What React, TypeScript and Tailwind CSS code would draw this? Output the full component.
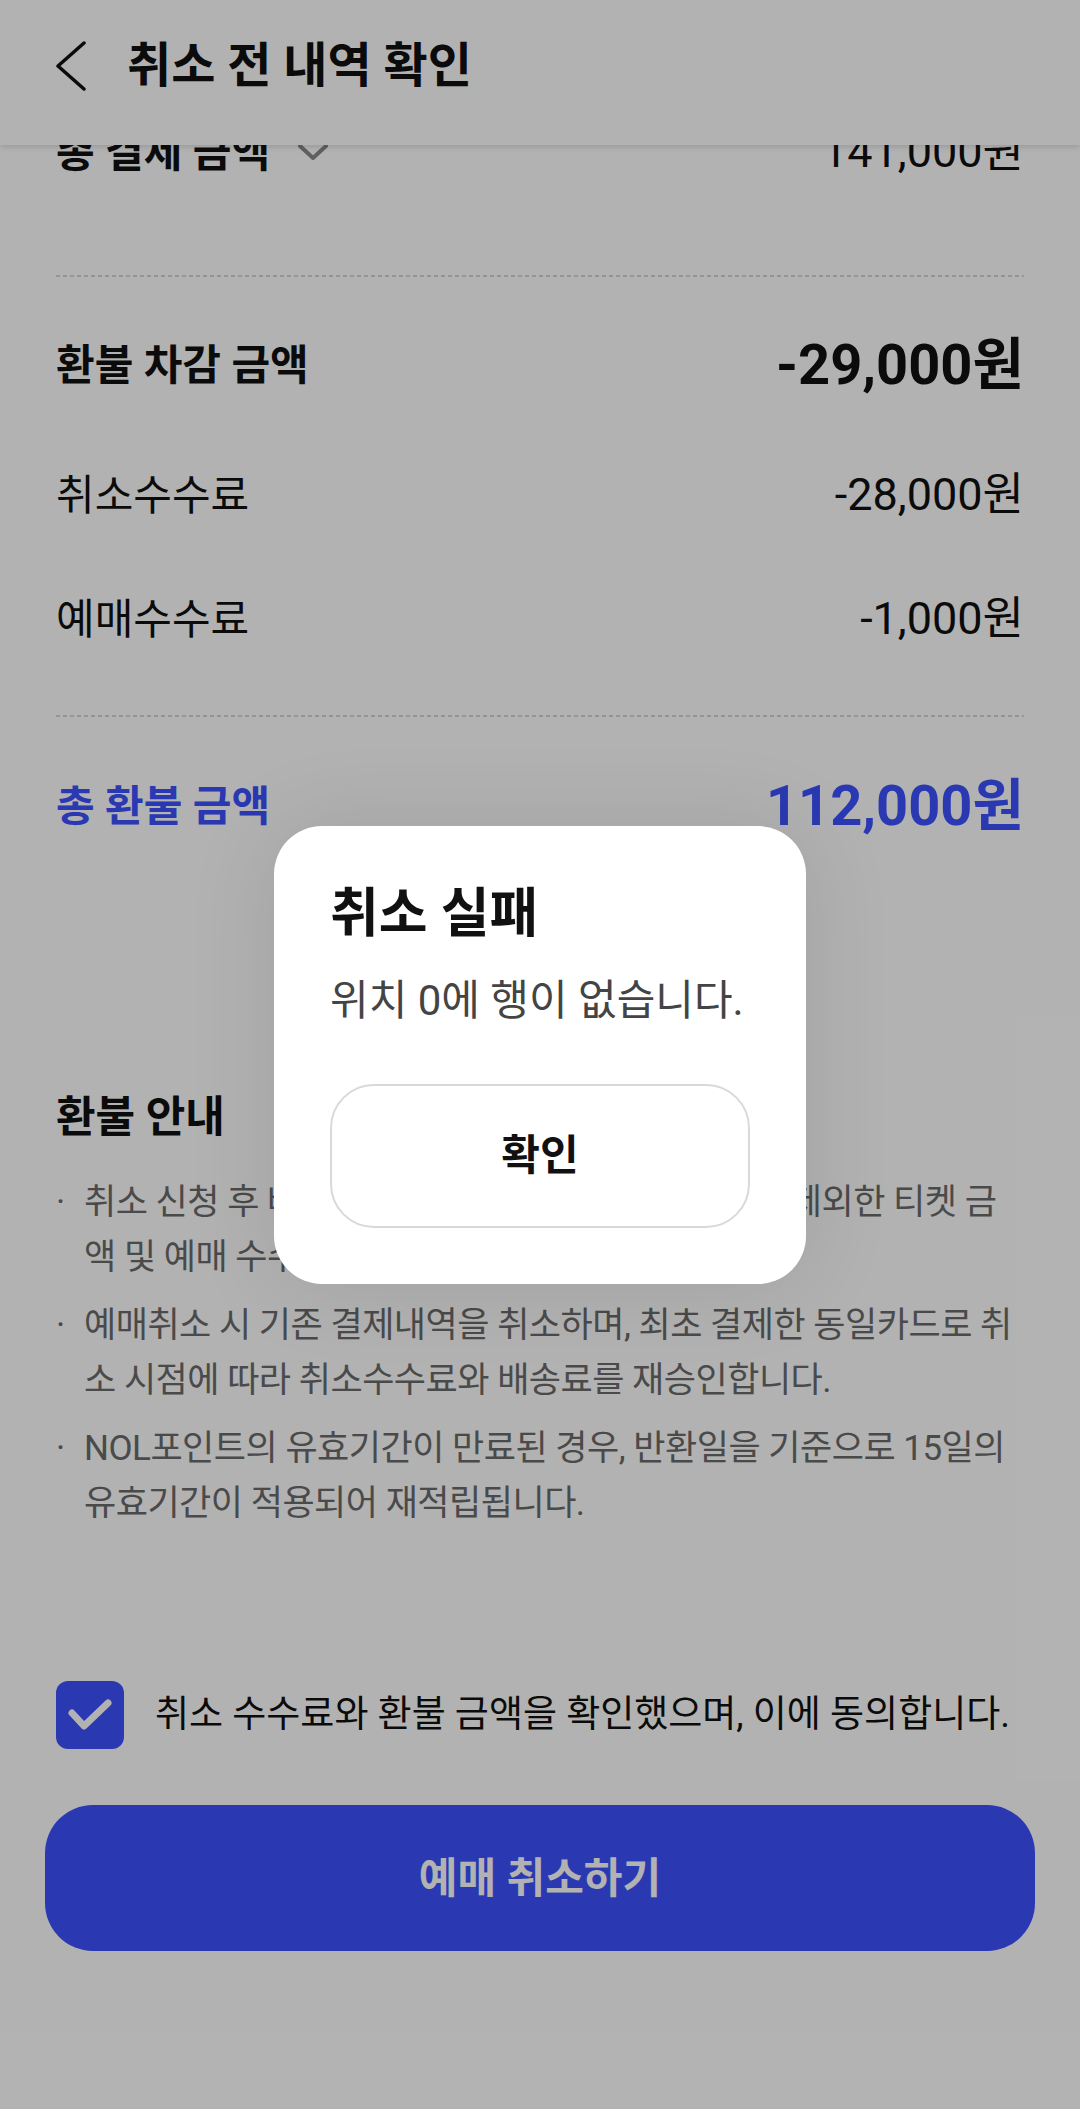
import type { ReactNode } from "react";

const refundNotes: string[][] = [
  ["취소 신청 후 배송비 및 발권 수수료, 취소수수료를 제외한 티켓 금", "액 및 예매 수수료가 환불됩니다."],
  ["예매취소 시 기존 결제내역을 취소하며, 최초 결제한 동일카드로 취", "소 시점에 따라 취소수수료와 배송료를 재승인합니다."],
  ["NOL포인트의 유효기간이 만료된 경우, 반환일을 기준으로 15일의", "유효기간이 적용되어 재적립됩니다."],
];

function Dashed({ className = "" }: { className?: string }) {
  return (
    <div
      className={`h-[2px] w-full bg-[repeating-linear-gradient(to_right,#d4d4d4_0_4px,transparent_4px_7px)] ${className}`}
    />
  );
}

function Row({ className = "", children }: { className?: string; children: ReactNode }) {
  return <div className={`flex h-[76px] items-center justify-between ${className}`}>{children}</div>;
}

function Header() {
  return (
    <header className="absolute inset-x-0 top-0 z-10 h-[145px] bg-white shadow-[0_2px_6px_rgba(0,0,0,0.14)]">
      <div className="flex h-[132px] items-center pl-[55px]">
        <svg width="32" height="50" viewBox="0 0 32 50" fill="none">
          <polyline
            points="29,2 3,25 29,48"
            stroke="#111"
            strokeWidth="3.5"
            strokeLinecap="round"
            strokeLinejoin="round"
          />
        </svg>
        <h1 className="ml-[40px] text-[48px] font-bold leading-none">취소 전 내역 확인</h1>
      </div>
    </header>
  );
}

function FailDialog() {
  return (
    <div className="absolute inset-0 z-20 flex items-center justify-center bg-black/30">
      <div className="w-[532px] rounded-[48px] bg-white p-[56px] shadow-[0_0_90px_rgba(0,0,0,0.1)]">
        <h3 className="text-[53px] font-bold leading-[64px] text-[#111]">취소 실패</h3>
        <p className="mt-[29px] text-[42px] leading-[52px] text-[#444]">위치 0에 행이 없습니다.</p>
        <button className="mt-[57px] flex h-[144px] w-full items-center justify-center rounded-[44px] border-2 border-[#d9d9d9] text-[42px] font-bold text-[#111]">
          확인
        </button>
      </div>
    </div>
  );
}

export default function App() {
  return (
    <div className="relative h-[2109px] w-[1080px] overflow-hidden bg-white font-[Roboto,'Noto_Sans_CJK_KR',sans-serif] text-[#111]">
      <Header />

      <main className="px-[56px] pt-[114px]">
        {/* 총 결제 금액 (헤더 아래로 스크롤됨) */}
        <Row>
          <div className="flex items-center gap-[28px]">
            <span className="text-[42px] font-bold">총 결제 금액</span>
            <svg width="30" height="16" viewBox="0 0 30 16" fill="none">
              <polyline points="2,2 15,14 28,2" stroke="#8a8a8a" strokeWidth="4" strokeLinecap="round" strokeLinejoin="round" />
            </svg>
          </div>
          <span className="text-[45px]">141,000원</span>
        </Row>

        <Dashed className="mt-[85px]" />

        <Row className="mt-[50px]">
          <span className="text-[42px] font-bold">환불 차감 금액</span>
          <span className="text-[56px] font-bold">-29,000원</span>
        </Row>
        <Row className="mt-[54px]">
          <span className="text-[42px]">취소수수료</span>
          <span className="text-[45px]">-28,000원</span>
        </Row>
        <Row className="mt-[48px]">
          <span className="text-[42px]">예매수수료</span>
          <span className="text-[45px]">-1,000원</span>
        </Row>

        <Dashed className="mt-[58px]" />

        <Row className="mt-[51px] text-[#3d52ff]">
          <span className="text-[42px] font-bold">총 환불 금액</span>
          <span className="text-[56px] font-bold">112,000원</span>
        </Row>

        {/* 환불 안내 */}
        <section className="mt-[248px]">
          <h2 className="text-[43px] font-bold leading-[50px]">환불 안내</h2>
          <ul className="mt-[33px] flex flex-col gap-[13px]">
            {refundNotes.map((lines) => (
              <li key={lines[0]} className="flex text-[35px] leading-[55px] tracking-[-0.5px] text-[#6b6b6b]">
                <span className="w-[28px] shrink-0">·</span>
                <p>
                  {lines.map((line, i) => (
                    <span key={i} className="block whitespace-nowrap">
                      {line}
                    </span>
                  ))}
                </p>
              </li>
            ))}
          </ul>
        </section>
      </main>

      <div className="px-[45px]">
        <label className="mt-[150px] flex h-[68px] items-center gap-[31px] pl-[11px]">
          <span className="flex h-[68px] w-[68px] shrink-0 items-center justify-center rounded-[12px] bg-[#3d52ff]">
            <svg width="68" height="68" viewBox="0 0 68 68" fill="none">
              <polyline points="16,32 28,45 52,22" stroke="#fff" strokeWidth="7" strokeLinecap="round" strokeLinejoin="round" />
            </svg>
          </span>
          <span className="text-[37px] text-[#111]">취소 수수료와 환불 금액을 확인했으며, 이에 동의합니다.</span>
        </label>

        <button className="mt-[56px] flex h-[146px] w-full items-center justify-center rounded-[48px] bg-[#3d52ff] text-[42px] font-bold text-white">
          예매 취소하기
        </button>
      </div>

      <FailDialog />
    </div>
  );
}
